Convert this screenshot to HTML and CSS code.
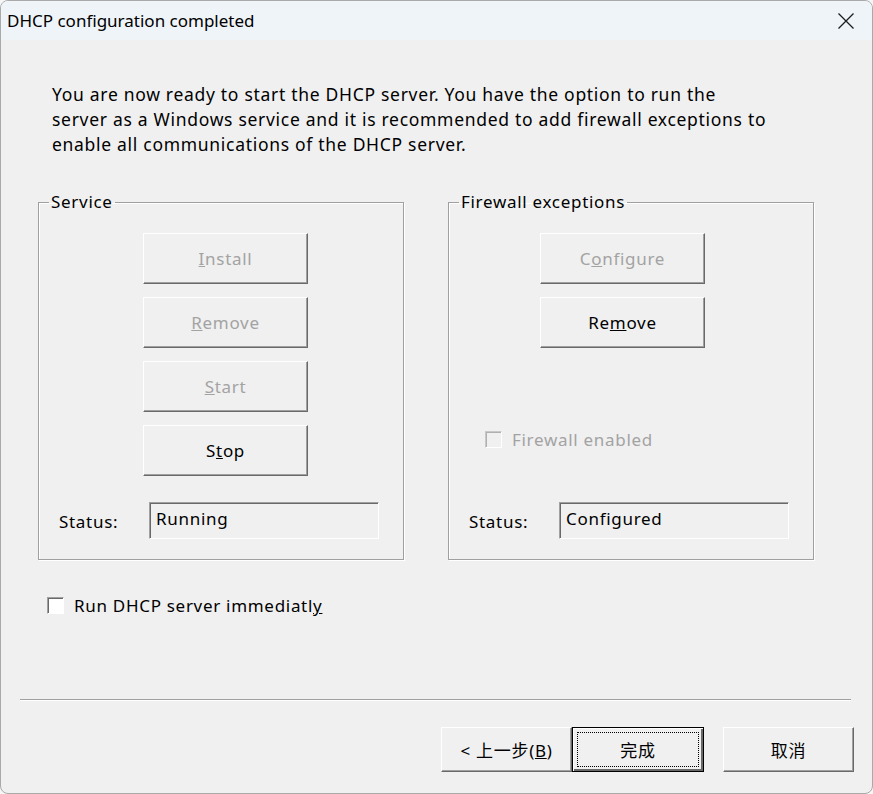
FILE: index.html
```html
<!DOCTYPE html>
<html lang="en">
  <head>
    <meta charset="UTF-8" />
    <meta name="viewport" content="width=device-width, initial-scale=1.0" />
    <title>DHCP configuration completed</title>
    <link rel="stylesheet" href="styles.css">
  </head>
  <body>
    <div class="window">
      <div class="titlebar">
        <span class="title">DHCP configuration completed</span>
        <svg class="close" width="18" height="18" viewBox="0 0 18 18">
          <path d="M1.5 1.5L16.5 16.5M16.5 1.5L1.5 16.5" />
        </svg>
      </div>

      <div class="content">
        <p class="intro">
          You are now ready to start the DHCP server. You have the option to run the<br>
          server as a Windows service and it is recommended to add firewall exceptions to<br>
          enable all communications of the DHCP server.
        </p>

        <div class="groups">
          <fieldset class="group service">
            <legend>Service</legend>
            <div class="stack">
              <button class="btn" disabled><u>I</u>nstall</button>
              <button class="btn" disabled><u>R</u>emove</button>
              <button class="btn" disabled><u>S</u>tart</button>
              <button class="btn">S<u>t</u>op</button>
            </div>
            <div class="status-row">
              <span class="status-label">Status:</span>
              <div class="field">Running</div>
            </div>
          </fieldset>

          <fieldset class="group firewall">
            <legend>Firewall exceptions</legend>
            <div class="stack">
              <button class="btn" disabled>C<u>o</u>nfigure</button>
              <button class="btn">Re<u>m</u>ove</button>
            </div>
            <label class="check disabled fw-check">
              <span class="box"></span><span>Firewall enabled</span>
            </label>
            <div class="status-row">
              <span class="status-label">Status:</span>
              <div class="field">Configured</div>
            </div>
          </fieldset>
        </div>

        <label class="check run-check">
          <span class="box"></span><span>Run DHCP server immediatl<u>y</u></span>
        </label>
      </div>

      <div class="separator"></div>

      <div class="footer">
        <button class="btn wide">&lt; 上一步(<u>B</u>)</button>
        <button class="btn wide default"><span class="focus">完成</span></button>
        <button class="btn wide cancel">取消</button>
      </div>
    </div>
  </body>
</html>
```

FILE: styles.css
```css
* {
  box-sizing: border-box;
}

body {
  margin: 0;
  background: #f6f6f6;
  font-family: "Noto Sans", "Noto Sans CJK SC", sans-serif;
  font-size: 17px;
  letter-spacing: 0.7px;
  color: #000;
}

.window {
  width: 873px;
  height: 794px;
  display: flex;
  flex-direction: column;
  background: #f0f0f0;
  border: 1px solid #a9a9a9;
  border-radius: 8px;
  overflow: hidden;
}

/* title bar */
.titlebar {
  height: 39px;
  flex: none;
  display: flex;
  align-items: center;
  justify-content: space-between;
  padding: 0 17px 0 6px;
  background: #eff4f9;
  letter-spacing: 0;
}

.title {
  font-size: 17px;
}

.close {
  stroke: #1c1c1c;
  stroke-width: 1.3;
  fill: none;
}

.content {
  padding: 42px 0 0 37px;
}

.intro {
  margin: 0 0 34px 14px;
  font-size: 17.5px;
  line-height: 25px;
}

/* group boxes */
.groups {
  display: flex;
  gap: 44px;
}

.group {
  width: 366px;
  height: 369px;
  margin: 0;
  padding: 20px 0 0 0;
  border: 1px solid #a0a0a0;
  box-shadow: inset 1px 1px #fff, 1px 1px #fff;
  display: flex;
  flex-direction: column;
}

.group legend {
  margin-left: 10px;
  padding: 0 2px;
  line-height: 22px;
}

.stack {
  display: flex;
  flex-direction: column;
  gap: 13px;
}

.service .stack {
  margin-left: 104px;
}

.firewall .stack {
  margin-left: 91px;
}

/* classic raised buttons */
.btn {
  width: 165px;
  height: 51px;
  font: inherit;
  letter-spacing: inherit;
  color: #000;
  background: #f0f0f0;
  border: 1px solid;
  border-color: #fff #696969 #696969 #fff;
  box-shadow: inset -1px -1px #a0a0a0;
  padding: 0;
}

.btn:disabled {
  color: #a3a3a3;
}

.status-row {
  display: flex;
  align-items: center;
  margin: auto 0 20px 20px;
}

.status-label {
  width: 90px;
  padding-top: 2px;
}

.field {
  width: 230px;
  height: 37px;
  padding: 1px 6px;
  border: 1px solid;
  border-color: #a0a0a0 #fff #fff #a0a0a0;
  box-shadow: inset 1px 1px #696969;
  line-height: 30px;
}

/* checkboxes */
.check {
  display: flex;
  align-items: center;
  gap: 10px;
}

.check .box {
  width: 17px;
  height: 17px;
  background: #fff;
  border: 1px solid;
  border-color: #a0a0a0 #fff #fff #a0a0a0;
  box-shadow: inset 1px 1px #696969;
}

.check.disabled {
  color: #a3a3a3;
}

.check.disabled .box {
  background: #f0f0f0;
  border-color: #c8c8c8 #fff #fff #c8c8c8;
  box-shadow: inset 1px 1px #b0b0b0;
}

.fw-check {
  margin: 80px 0 0 36px;
}

.run-check {
  margin: 34px 0 0 9px;
}

.separator {
  margin: auto 21px 0 19px;
  height: 2px;
  border-top: 1px solid #a0a0a0;
  border-bottom: 1px solid #fff;
}

/* dialog buttons */
.footer {
  display: flex;
  justify-content: flex-end;
  padding: 26px 18px 21px 0;
}

.btn.wide {
  width: 131px;
  height: 45px;
}

.btn.default {
  width: 132px;
  border: 1px solid #000;
  box-shadow: inset 1px 1px #fff, inset -2px -2px #696969;
  padding: 4px;
}

.focus {
  display: flex;
  align-items: center;
  justify-content: center;
  height: 100%;
  border: 1px dotted #000;
}

.btn.cancel {
  margin-left: 19px;
}
```
